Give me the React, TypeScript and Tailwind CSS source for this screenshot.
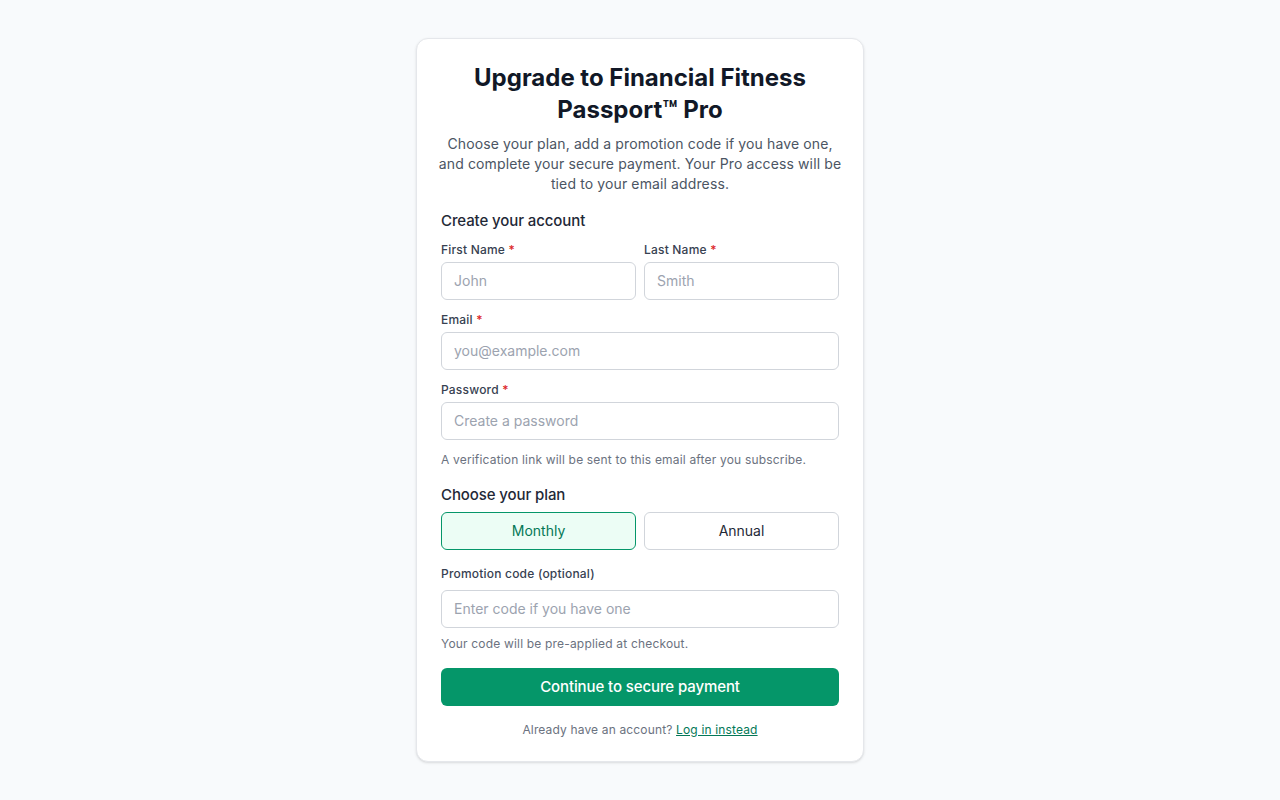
import React from "react";

function Label({ children, required }: { children: React.ReactNode; required?: boolean }) {
  return (
    <label className="block pt-px text-[12px] leading-[18px] font-medium tracking-[0.2px] text-[#374151] mb-[3px]">
      {children}
      {required && <span className="text-[#dc2626]"> *</span>}
    </label>
  );
}

function Input({ placeholder, type = "text" }: { placeholder: string; type?: string }) {
  return (
    <input
      type={type}
      placeholder={placeholder}
      className="block w-full h-[38px] rounded-md border border-[#d1d5db] bg-white px-3 pb-[2px] text-[14px] text-[#111827] placeholder:text-[#9ca3af] outline-none"
    />
  );
}

export default function App() {
  return (
    <div
      className="min-h-screen bg-[#f8fafc] pt-[38px] pb-[38px]"
      style={{ fontFamily: "Inter, 'Noto Sans', sans-serif" }}
    >
      <div className="mx-auto w-[448px] rounded-xl border border-[#e5e7eb] bg-white px-6 pt-[23px] pb-[23px] shadow-sm">
        <h1 className="text-center text-2xl leading-8 font-bold text-[#111827]">
          Upgrade to Financial Fitness Passport™ Pro
        </h1>
        <p className="mt-2 -mx-1 text-center text-[14px] leading-5 tracking-[0.12px] text-[#4b5563]">
          Choose your plan, add a promotion code if you have one, and complete your secure payment. Your Pro access
          will be tied to your email address.
        </p>

        <h2 className="mt-[17px] text-[15px] leading-5 font-medium tracking-[-0.1px] text-[#1f2937]">
          Create your account
        </h2>

        <div className="mt-[9px] grid grid-cols-2 gap-2">
          <div>
            <Label required>First Name</Label>
            <Input placeholder="John" />
          </div>
          <div>
            <Label required>Last Name</Label>
            <Input placeholder="Smith" />
          </div>
        </div>

        <div className="mt-[10px]">
          <Label required>Email</Label>
          <Input placeholder="you@example.com" type="email" />
        </div>

        <div className="mt-[10px]">
          <Label required>Password</Label>
          <Input placeholder="Create a password" type="password" />
        </div>

        <p className="mt-3 text-[12px] leading-4 tracking-[0.18px] text-[#6b7280]">
          A verification link will be sent to this email after you subscribe.
        </p>

        <h2 className="mt-[17px] text-[15px] leading-5 font-medium tracking-[-0.1px] text-[#1f2937]">
          Choose your plan
        </h2>

        <div className="mt-[7px] grid grid-cols-2 gap-2">
          <button className="h-[38px] rounded-md border border-[#059669] bg-[#ecfdf5] pb-[2px] text-[14px] text-[#047857]">
            Monthly
          </button>
          <button className="h-[38px] rounded-md border border-[#d1d5db] bg-white pb-[2px] text-[14px] text-[#1f2937]">
            Annual
          </button>
        </div>

        <div className="mt-[14px]">
          <label className="block pt-px text-[12px] leading-[18px] font-medium tracking-[0.2px] text-[#374151] mb-[7px]">
            Promotion code (optional)
          </label>
          <Input placeholder="Enter code if you have one" />
        </div>

        <p className="mt-2 text-[12px] leading-4 tracking-[0.18px] text-[#6b7280]">
          Your code will be pre-applied at checkout.
        </p>

        <button className="mt-4 h-[38px] w-full rounded-md bg-[#059669] text-[15px] font-medium tracking-[-0.1px] text-white">
          Continue to secure payment
        </button>

        <p className="mt-4 text-center text-[12px] leading-4 tracking-[0.15px] text-[#6b7280]">
          Already have an account?{" "}
          <a href="#" className="text-[#047857] underline">
            Log in instead
          </a>
        </p>
      </div>
    </div>
  );
}
